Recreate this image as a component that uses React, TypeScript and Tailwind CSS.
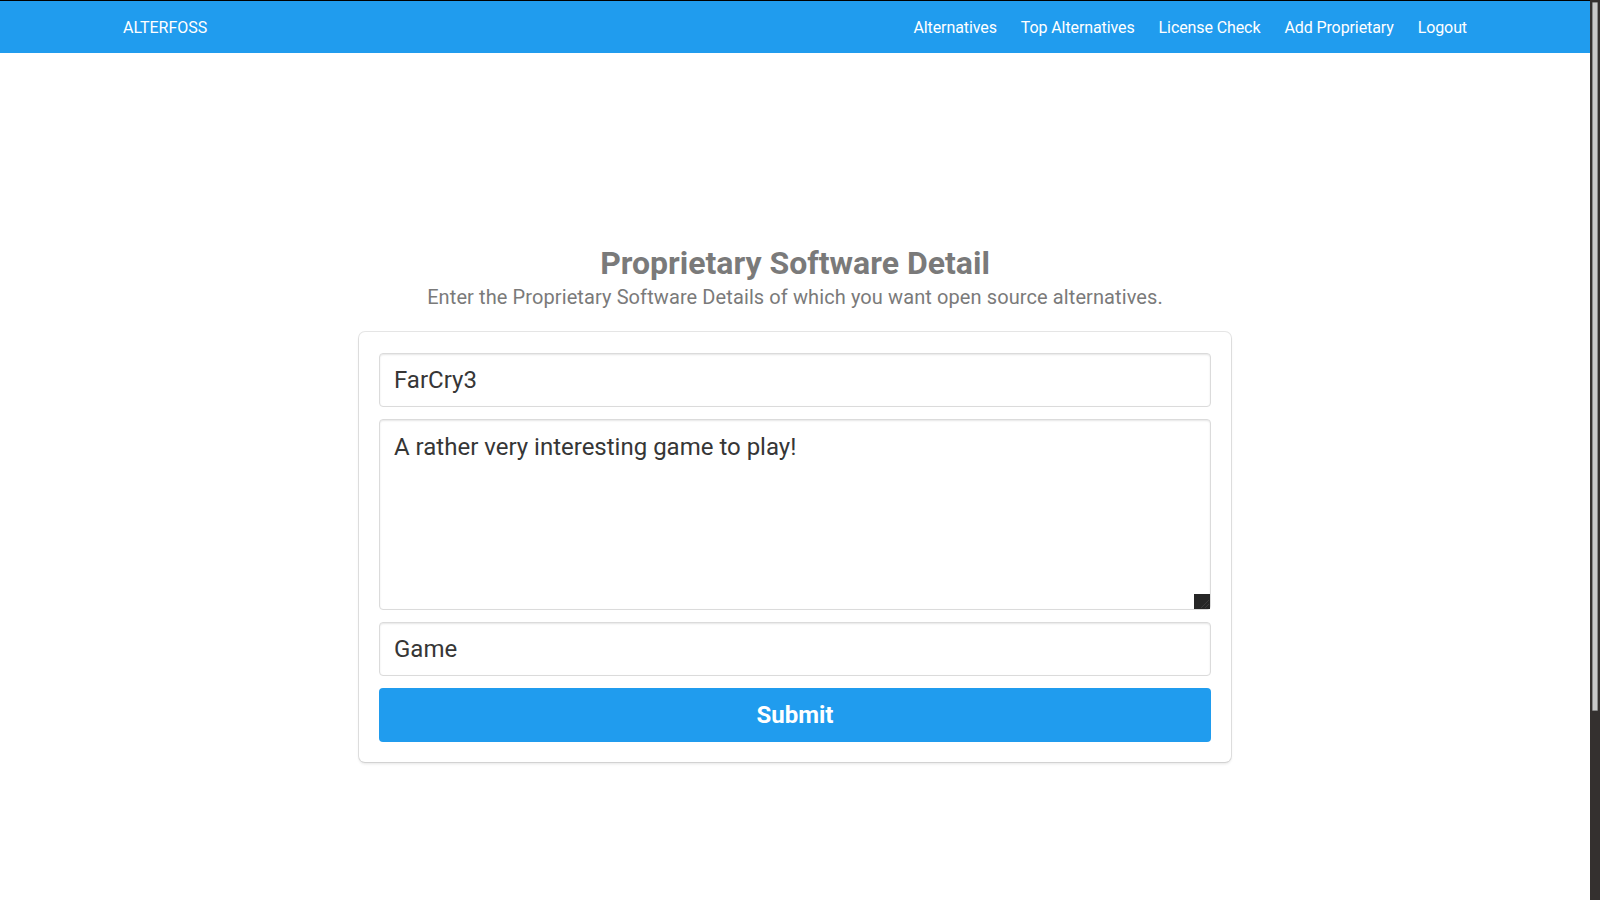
import React from "react";

export default function App() {
  const navItems = ["Alternatives", "Top Alternatives", "License Check", "Add Proprietary", "Logout"];
  return (
    <div
      className="flex h-screen w-full overflow-hidden bg-white"
      style={{ fontFamily: "Roboto, 'Noto Sans', sans-serif" }}
    >
      <div className="flex min-w-0 flex-1 flex-col">
        <div className="h-px bg-black" />
        <nav className="h-[52px] bg-[#209cee] text-white">
          <div className="mx-auto flex h-full w-[1344px] items-center justify-between pt-[2px] text-[16px]">
            <span>ALTERFOSS</span>
            <div className="flex items-center gap-[24px] tracking-[-0.1px]">
              {navItems.map((t) => (
                <span key={t}>{t}</span>
              ))}
            </div>
          </div>
        </nav>
        <main className="flex flex-col items-center pt-[192px]">
          <h1 className="text-[32px] font-bold leading-[36px] text-[#7a7a7a]">Proprietary Software Detail</h1>
          <p className="mt-[4px] text-[20px] leading-[25px] tracking-[0.1px] text-[#7a7a7a]">
            Enter the Proprietary Software Details of which you want open source alternatives.
          </p>
          <div className="mt-[22px] w-[872px] rounded-[6px] bg-white px-[20px] pb-[20px] pt-[21px] shadow-[0_2px_3px_rgba(10,10,10,0.1),0_0_0_1px_rgba(10,10,10,0.1)]">
            <div className="flex flex-col">
              <input
                readOnly
                defaultValue="FarCry3"
                className="h-[54px] w-full rounded-[4px] border border-[#dbdbdb] bg-white px-[14px] text-[24px] text-[#363636] shadow-[inset_0_1px_2px_rgba(10,10,10,0.1)] outline-none"
              />
              <div className="relative mt-[12px]">
                <textarea
                  readOnly
                  defaultValue="A rather very interesting game to play!"
                  className="block h-[191px] w-full resize-none rounded-[4px] border border-[#dbdbdb] bg-white px-[14px] pt-[9px] text-[24px] leading-[1.5] text-[#363636] shadow-[inset_0_1px_2px_rgba(10,10,10,0.1)] outline-none"
                />
                <div className="absolute bottom-[1px] right-[1px] h-[15px] w-[16px] overflow-hidden bg-[#262626]">
                  <svg width="16" height="15" viewBox="0 0 16 15">
                    <path d="M15 6 L7 14 M15 10 L11 14" stroke="#3c3c3c" strokeWidth="1" />
                  </svg>
                </div>
              </div>
              <input
                readOnly
                defaultValue="Game"
                className="mt-[12px] h-[54px] w-full rounded-[4px] border border-[#dbdbdb] bg-white px-[14px] text-[24px] text-[#363636] shadow-[inset_0_1px_2px_rgba(10,10,10,0.1)] outline-none"
              />
              <button className="mt-[12px] h-[54px] w-full rounded-[4px] bg-[#209cee] text-[24px] font-bold text-white">
                Submit
              </button>
            </div>
          </div>
        </main>
      </div>
      <div className="flex w-[10px] flex-col bg-[#34302f] pt-[2px]">
        <div className="mx-auto h-[709px] w-[6px] rounded-[1px] border border-[#8a8a8a] bg-[#c8c8c8]" />
      </div>
    </div>
  );
}
